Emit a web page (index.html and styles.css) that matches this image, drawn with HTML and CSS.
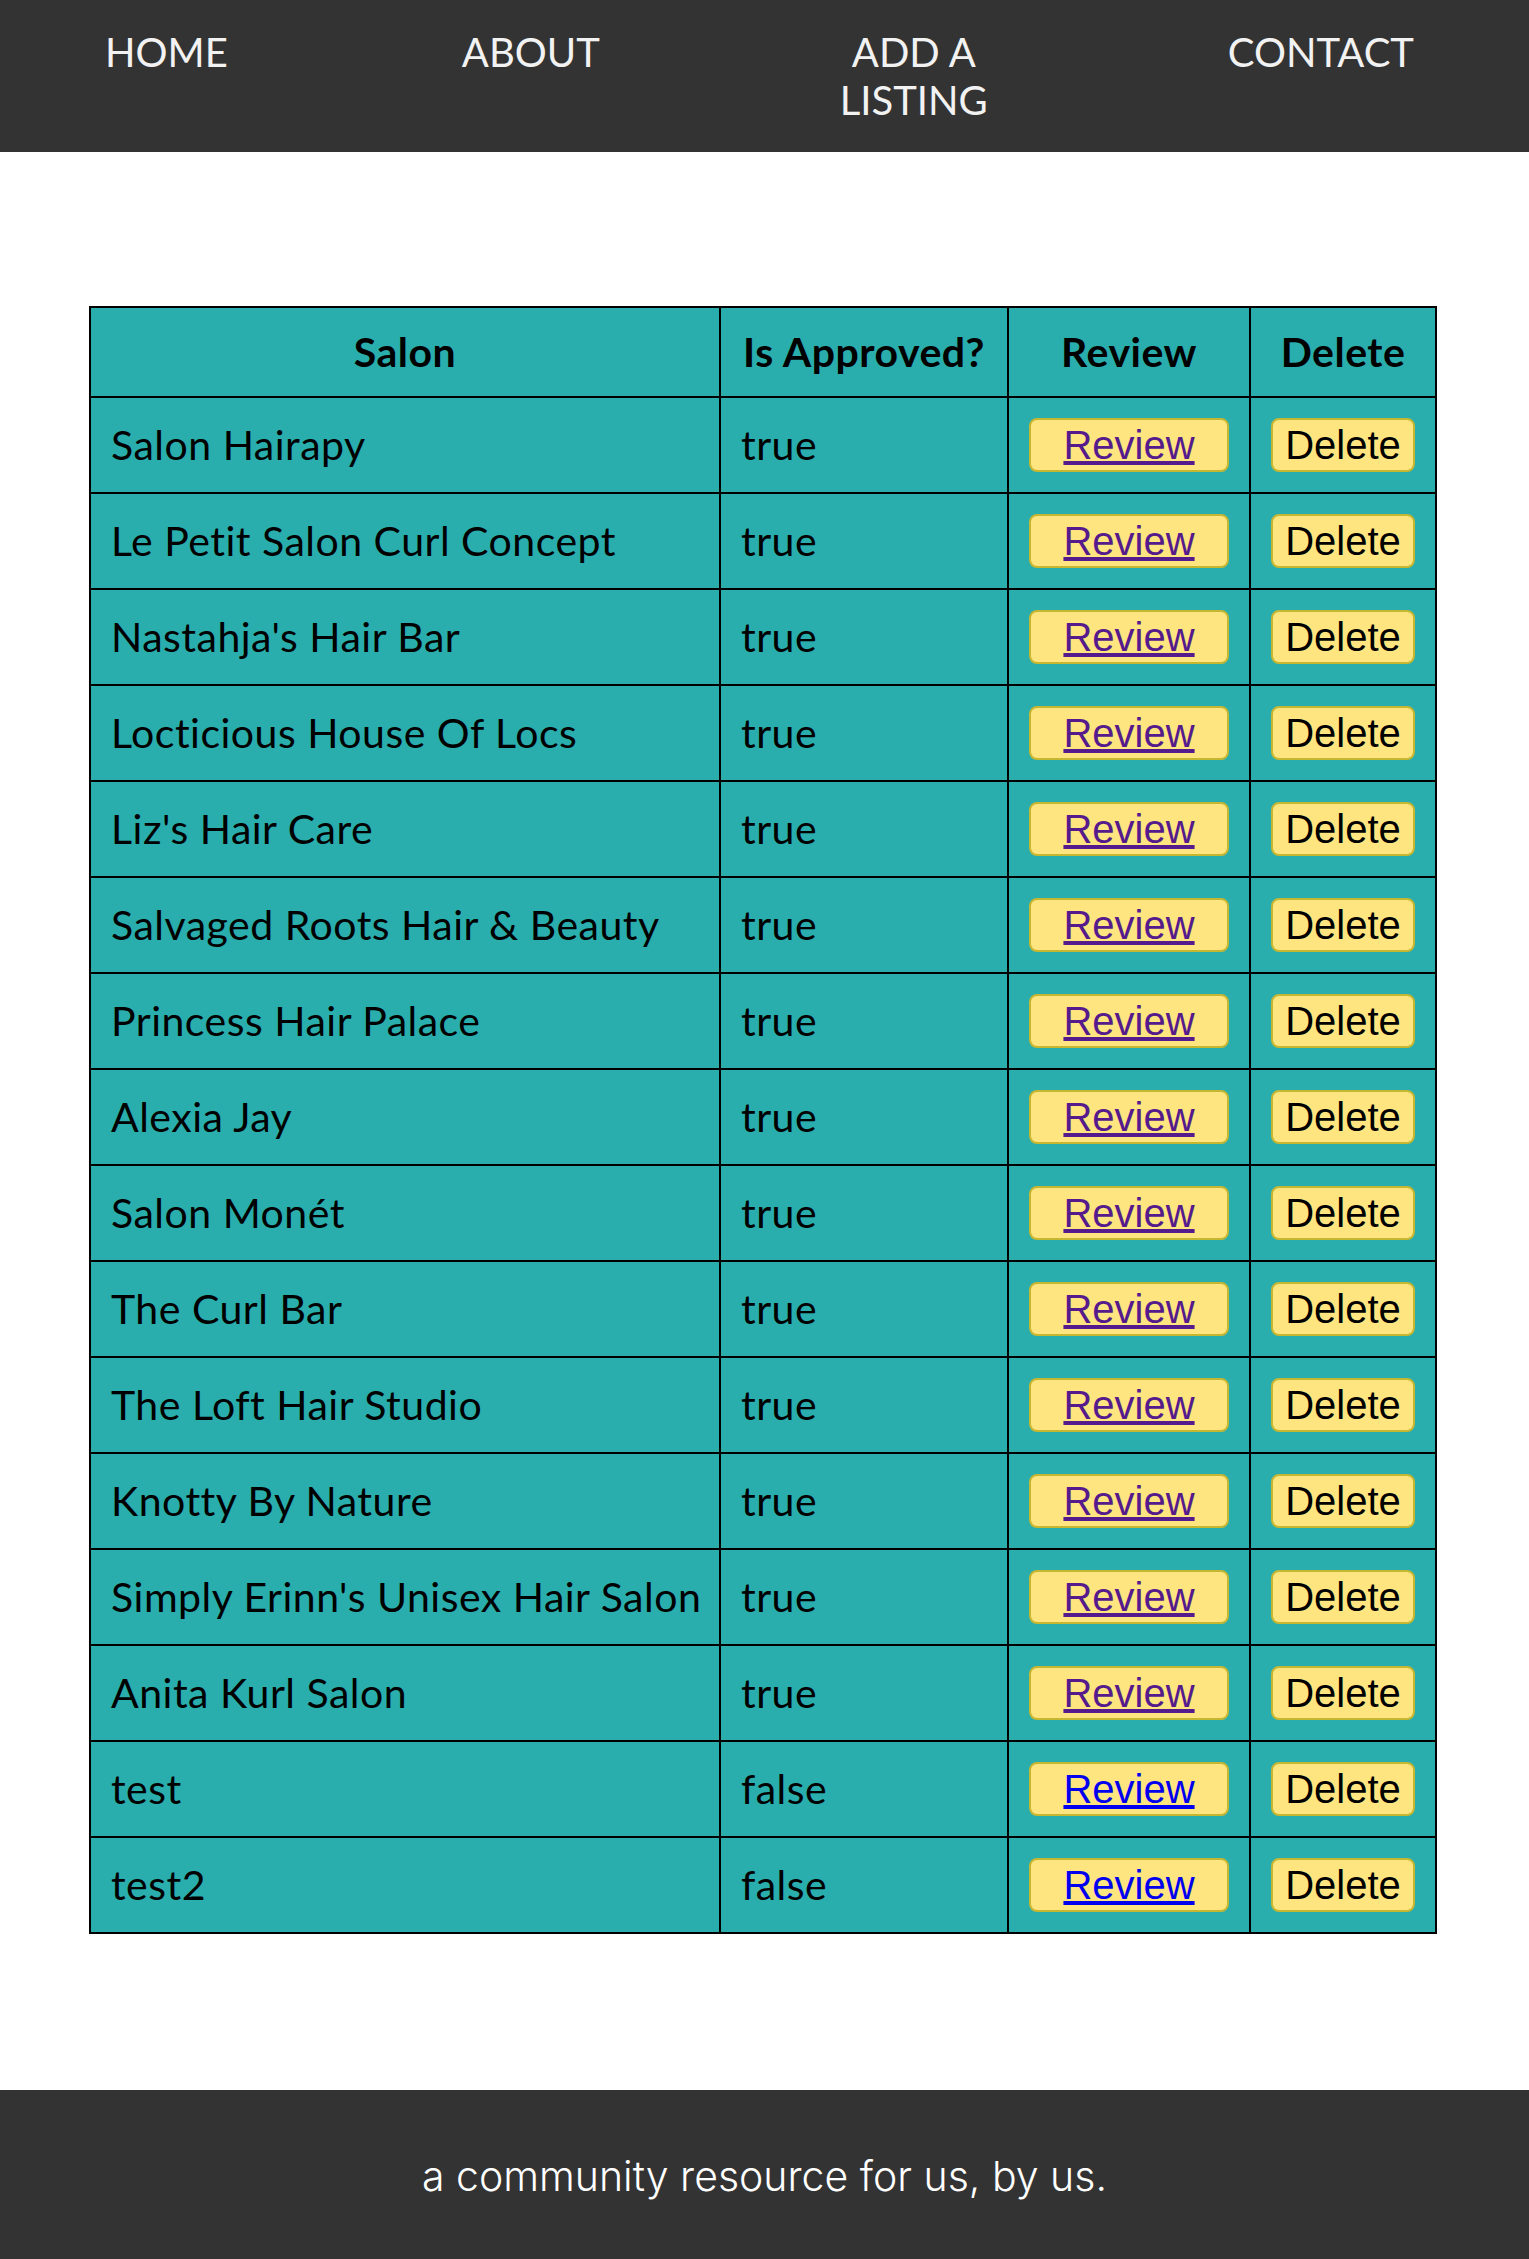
FILE: index.html
```html
<!DOCTYPE html>
<html lang="en">
<head>
<meta charset="utf-8">
<title>Admin - Salons</title>
<link rel="stylesheet" href="styles.css">
</head>
<body>
<header class="site-header">
  <nav>
    <ul class="nav-list">
      <li class="nav-item"><a href="#">HOME</a></li>
      <li class="nav-item"><a href="#">ABOUT</a></li>
      <li class="nav-item nav-item-wrap"><a href="#">ADD A LISTING</a></li>
      <li class="nav-item"><a href="#">CONTACT</a></li>
    </ul>
  </nav>
</header>
<main class="content">
  <table class="salon-table">
    <colgroup>
      <col class="col-salon">
      <col class="col-approved">
      <col class="col-review">
      <col class="col-delete">
    </colgroup>
    <thead>
      <tr><th>Salon</th><th>Is Approved?</th><th>Review</th><th>Delete</th></tr>
    </thead>
    <tbody>
      <tr><td>Salon Hairapy</td><td>true</td><td class="action"><button class="btn btn-review"><a class="visited" href="#">Review</a></button></td><td class="action"><button class="btn btn-delete">Delete</button></td></tr>
      <tr><td>Le Petit Salon Curl Concept</td><td>true</td><td class="action"><button class="btn btn-review"><a class="visited" href="#">Review</a></button></td><td class="action"><button class="btn btn-delete">Delete</button></td></tr>
      <tr><td>Nastahja's Hair Bar</td><td>true</td><td class="action"><button class="btn btn-review"><a class="visited" href="#">Review</a></button></td><td class="action"><button class="btn btn-delete">Delete</button></td></tr>
      <tr><td>Locticious House Of Locs</td><td>true</td><td class="action"><button class="btn btn-review"><a class="visited" href="#">Review</a></button></td><td class="action"><button class="btn btn-delete">Delete</button></td></tr>
      <tr><td>Liz's Hair Care</td><td>true</td><td class="action"><button class="btn btn-review"><a class="visited" href="#">Review</a></button></td><td class="action"><button class="btn btn-delete">Delete</button></td></tr>
      <tr><td>Salvaged Roots Hair &amp; Beauty</td><td>true</td><td class="action"><button class="btn btn-review"><a class="visited" href="#">Review</a></button></td><td class="action"><button class="btn btn-delete">Delete</button></td></tr>
      <tr><td>Princess Hair Palace</td><td>true</td><td class="action"><button class="btn btn-review"><a class="visited" href="#">Review</a></button></td><td class="action"><button class="btn btn-delete">Delete</button></td></tr>
      <tr><td>Alexia Jay</td><td>true</td><td class="action"><button class="btn btn-review"><a class="visited" href="#">Review</a></button></td><td class="action"><button class="btn btn-delete">Delete</button></td></tr>
      <tr><td>Salon Monét</td><td>true</td><td class="action"><button class="btn btn-review"><a class="visited" href="#">Review</a></button></td><td class="action"><button class="btn btn-delete">Delete</button></td></tr>
      <tr><td>The Curl Bar</td><td>true</td><td class="action"><button class="btn btn-review"><a class="visited" href="#">Review</a></button></td><td class="action"><button class="btn btn-delete">Delete</button></td></tr>
      <tr><td>The Loft Hair Studio</td><td>true</td><td class="action"><button class="btn btn-review"><a class="visited" href="#">Review</a></button></td><td class="action"><button class="btn btn-delete">Delete</button></td></tr>
      <tr><td>Knotty By Nature</td><td>true</td><td class="action"><button class="btn btn-review"><a class="visited" href="#">Review</a></button></td><td class="action"><button class="btn btn-delete">Delete</button></td></tr>
      <tr><td>Simply Erinn's Unisex Hair Salon</td><td>true</td><td class="action"><button class="btn btn-review"><a class="visited" href="#">Review</a></button></td><td class="action"><button class="btn btn-delete">Delete</button></td></tr>
      <tr><td>Anita Kurl Salon</td><td>true</td><td class="action"><button class="btn btn-review"><a class="visited" href="#">Review</a></button></td><td class="action"><button class="btn btn-delete">Delete</button></td></tr>
      <tr><td>test</td><td>false</td><td class="action"><button class="btn btn-review"><a class="unvisited" href="#">Review</a></button></td><td class="action"><button class="btn btn-delete">Delete</button></td></tr>
      <tr><td>test2</td><td>false</td><td class="action"><button class="btn btn-review"><a class="unvisited" href="#">Review</a></button></td><td class="action"><button class="btn btn-delete">Delete</button></td></tr>
    </tbody>
  </table>
</main>
<footer class="site-footer">
  <p class="tagline">a community resource for us, by us.</p>
</footer>
</body>
</html>
```

FILE: styles.css
```css
* { box-sizing: border-box; }

html, body {
  margin: 0;
  padding: 0;
  background: #ffffff;
  font-family: "Lato", "Open Sans", sans-serif;
  color: #000;
}

.site-header {
  background: #333333;
  height: 152px;
}

.nav-list {
  list-style: none;
  margin: 0;
  padding: 28px 115px 0 105px;
  display: flex;
  justify-content: space-between;
  align-items: flex-start;
}

.nav-item {
  font-size: 40px;
  line-height: 48px;
  text-align: center;
}

.nav-item a {
  color: #f2f2f2;
  text-decoration: none;
}

.nav-item-wrap {
  max-width: 160px;
}

.content {
  padding: 154px 94px 156px 89px;
}

.salon-table {
  border-collapse: collapse;
  table-layout: fixed;
  width: 1346px;
  background: #29adad;
  font-size: 41px;
  letter-spacing: 0.5px;
  border: 2px solid #000;
}

.col-salon { width: 630px; }
.col-approved { width: 288px; }
.col-review { width: 242px; }
.col-delete { width: 186px; }

.salon-table th,
.salon-table td {
  border: 2px solid #000;
  vertical-align: middle;
  line-height: 48px;
  white-space: nowrap;
}

.salon-table th {
  font-weight: 700;
  text-align: center;
  padding: 20px 10px;
  height: 90px;
}

.salon-table td {
  text-align: left;
  font-weight: 400;
  padding: 0 20px;
  height: 96px;
}

.salon-table td.action {
  text-align: center;
  padding: 0;
  line-height: 0;
  letter-spacing: 0;
}

.btn {
  display: inline-block;
  font-family: "Liberation Sans", Arial, sans-serif;
  font-size: 40px;
  line-height: 46px;
  height: 54px;
  background: #fee57f;
  border: 2px solid #c6b733;
  border-radius: 8px;
  padding: 2px 12px;
  color: #000;
  vertical-align: middle;
  margin: 0;
  letter-spacing: 0;
}

.btn-review {
  padding: 2px 32px;
}

.btn a {
  text-decoration: underline;
}

.btn a.visited { color: #551a8b; }
.btn a.unvisited { color: #0000ee; }

.site-footer {
  background: #333333;
  height: 171px;
  display: flex;
  align-items: center;
  justify-content: center;
}

.tagline {
  margin: 0;
  color: #ffffff;
  font-family: "Inter", "Lato", sans-serif;
  font-weight: 300;
  font-size: 41px;
}
```
